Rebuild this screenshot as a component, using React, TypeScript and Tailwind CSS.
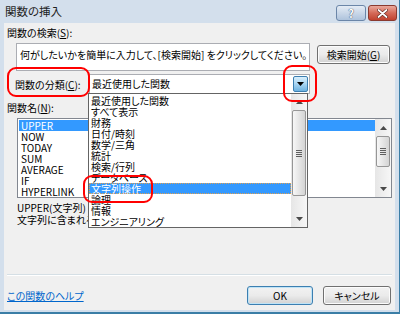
import type { FC } from 'react';

const categories = [
  '最近使用した関数',
  'すべて表示',
  '財務',
  '日付/時刻',
  '数学/三角',
  '統計',
  '検索/行列',
  'データベース',
  '文字列操作',
  '論理',
  '情報',
  'エンジニアリング',
];

const functions = ['UPPER', 'NOW', 'TODAY', 'SUM', 'AVERAGE', 'IF', 'HYPERLINK'];

const Arrow: FC<{ down?: boolean }> = ({ down }) => (
  <svg width="7" height="4" viewBox="0 0 7 4">
    <path d={down ? 'M0 0h7L3.5 4z' : 'M0 4h7L3.5 0z'} fill="#4a4a4a" />
  </svg>
);

// win7 風スクロールバー
const ScrollBar: FC<{ upH: number; thumbH: number; downH: number }> = ({ upH, thumbH, downH }) => (
  <div className="w-[16px] h-full flex flex-col bg-gradient-to-r from-[#e6e6e6] to-[#f7f7f7]">
    <div className="flex items-center justify-center" style={{ height: upH }}>
      <Arrow />
    </div>
    <div
      className="mx-[1px] rounded-[2px] border border-[#969696] bg-gradient-to-r from-[#f7f7f7] to-[#d4d4d4] flex flex-col items-center justify-center gap-[1px]"
      style={{ height: thumbH }}
    >
      <div className="w-[6px] h-[1px] bg-[#5f5f5f]" />
      <div className="w-[6px] h-[1px] bg-[#5f5f5f]" />
      <div className="w-[6px] h-[1px] bg-[#5f5f5f]" />
      <div className="w-[6px] h-[1px] bg-[#5f5f5f]" />
    </div>
    <div className="flex-1" />
    <div className="flex items-center justify-center" style={{ height: downH }}>
      <Arrow down />
    </div>
  </div>
);

const WinButton: FC<{ children: React.ReactNode; primary?: boolean; className?: string }> = ({ children, primary, className }) => (
  <div
    className={`h-[19px] rounded-[3px] border flex items-center justify-center leading-[12px] bg-gradient-to-b from-[#f2f2f2] via-[#ebebeb] to-[#d2d2d2] ${
      primary ? 'border-[#3c7fb1] shadow-[inset_0_0_0_1px_#bfe3f6]' : 'border-[#707070] shadow-[inset_0_0_0_1px_#fcfcfc]'
    } ${className ?? ''}`}
  >
    {children}
  </div>
);

const App: FC = () => {
  return (
    <div className="relative w-[400px] h-[314px] overflow-hidden bg-[#d3dfec] border-r border-b-2 border-[#3b7ea6] flex flex-col text-[10px] text-black font-['Noto_Sans_CJK_JP','Noto_Sans',sans-serif] [font-feature-settings:'palt']">
      {/* タイトルバー */}
      <div className="h-[23px] flex justify-between items-start shrink-0">
        <div className="pl-[5px] pt-[5px] text-[11.5px] leading-[13px] text-[#1e1e1e]">関数の挿入</div>
        <div className="flex gap-[2px] mt-[5px] mr-[2px]">
          <div className="w-[30px] h-[16px] rounded-[3px] border border-[#6b86a8] bg-gradient-to-b from-[#e4ecf5] via-[#c9d7e8] to-[#aec3dc] flex items-center justify-center">
            <span className="text-[11px] leading-[11px] font-bold text-white [text-shadow:0_0_1px_#3a4d66,0_0_1px_#3a4d66]">?</span>
          </div>
          <div className="w-[29px] h-[16px] rounded-[3px] border border-[#8a3a2f] bg-gradient-to-b from-[#e9a99d] via-[#d46a58] to-[#c0412e] flex items-center justify-center">
            <svg width="11" height="9" viewBox="0 0 11 9">
              <path d="M1.5 1l8 7M9.5 1l-8 7" stroke="#5a2219" strokeWidth="3" strokeLinecap="round" />
              <path d="M1.5 1l8 7M9.5 1l-8 7" stroke="#fff" strokeWidth="1.8" strokeLinecap="round" />
            </svg>
          </div>
        </div>
      </div>

      {/* 本体 */}
      <div className="flex-1 ml-[4px] mr-[4px] mb-[2px] bg-[#f0f0f0] flex flex-col">
        <div className="mt-[3px] ml-[3px] leading-[13px]">
          関数の検索(<span className="underline">S</span>):
        </div>

        <div className="mt-[4px] ml-[12px] flex items-start gap-[7px]">
          <div className="w-[294px] h-[28px] border border-[#abadb3] bg-white pl-[3px] pt-[4px] leading-[13px] whitespace-nowrap overflow-hidden">
            何がしたいかを簡単に入力して、[検索開始] をクリックしてください。
          </div>
          <WinButton className="mt-[2px] w-[73px]">
            検索開始(<span className="underline">G</span>)
          </WinButton>
        </div>

        <div className="mt-[3px] flex items-center h-[20px]">
          <div className="ml-[11px] w-[74px] leading-[13px]">
            関数の分類(<span className="underline">C</span>):
          </div>
          <div className="w-[221px] h-[20px] border border-[#abadb3] bg-white flex items-center justify-between pl-[2px]">
            <span className="leading-[12px]">最近使用した関数</span>
            <div className="w-[15px] h-[16px] mr-[1px] rounded-[2px] border border-[#3c7fb1] bg-gradient-to-b from-[#d9effc] via-[#a8d5f2] to-[#6cb2e0] flex items-center justify-center">
              <svg width="7" height="4" viewBox="0 0 7 4">
                <path d="M0 0h7L3.5 4z" fill="#000" />
              </svg>
            </div>
          </div>
        </div>

        <div className="mt-[7px] ml-[3px] leading-[13px]">
          関数名(<span className="underline">N</span>):
        </div>

        <div className="mt-[4px] ml-[13px] w-[375px] h-[80px] border border-[#828790] bg-white flex">
          <div className="flex-1 pt-[1px] pl-[1px]">
            {functions.map((f, i) => (
              <div
                key={f}
                className={`h-[11px] leading-[11px] pl-[2px] ${i === 0 ? 'bg-[#3399ff] text-white' : ''}`}
              >
                {f}
              </div>
            ))}
          </div>
          <ScrollBar upH={17} thumbH={31} downH={17} />
        </div>

        <div className="mt-[4px] ml-[13px] leading-[12px]">
          <div>UPPER(文字列)</div>
          <div>文字列に含まれる英字をすべて大文字に変換します。</div>
        </div>

        <div className="flex-1" />

        <div className="mx-[3px] h-[2px] border-t border-[#d5dfe5] border-b border-b-white" />

        <div className="mt-[10px] mb-[5px] flex items-center justify-between">
          <span className="ml-[3px] leading-[12px] text-[#0066cc] underline">この関数のヘルプ</span>
          <div className="flex gap-[10px] mr-[4px]">
            <WinButton primary className="w-[66px]">OK</WinButton>
            <WinButton className="w-[68px]">キャンセル</WinButton>
          </div>
        </div>
      </div>

      {/* 分類ドロップダウン (開いた状態) */}
      <div className="absolute left-[88px] top-[93px] w-[220px] h-[135px] border border-[#646464] bg-white flex">
        <div className="flex-1 pt-[1px]">
          {categories.map((c, i) => (
            <div
              key={c}
              className={`h-[11px] leading-[11px] pl-[2px] ${
                i === 8 ? 'bg-[#3399ff] text-white outline-1 outline-dotted outline-[#e0a050] -outline-offset-1' : ''
              }`}
            >
              {c}
            </div>
          ))}
        </div>
        <ScrollBar upH={16} thumbH={86} downH={16} />
      </div>

      {/* 赤い囲み */}
      <div className="absolute left-[7px] top-[67px] w-[83px] h-[30px] border-2 border-[#ff0000] rounded-[9px]" />
      <div className="absolute left-[283px] top-[65px] w-[34px] h-[37px] border-2 border-[#ff0000] rounded-[9px]" />
      <div className="absolute left-[83px] top-[175px] w-[70px] h-[28px] border-2 border-[#ff0000] rounded-[9px]" />
    </div>
  );
};

export default App;
